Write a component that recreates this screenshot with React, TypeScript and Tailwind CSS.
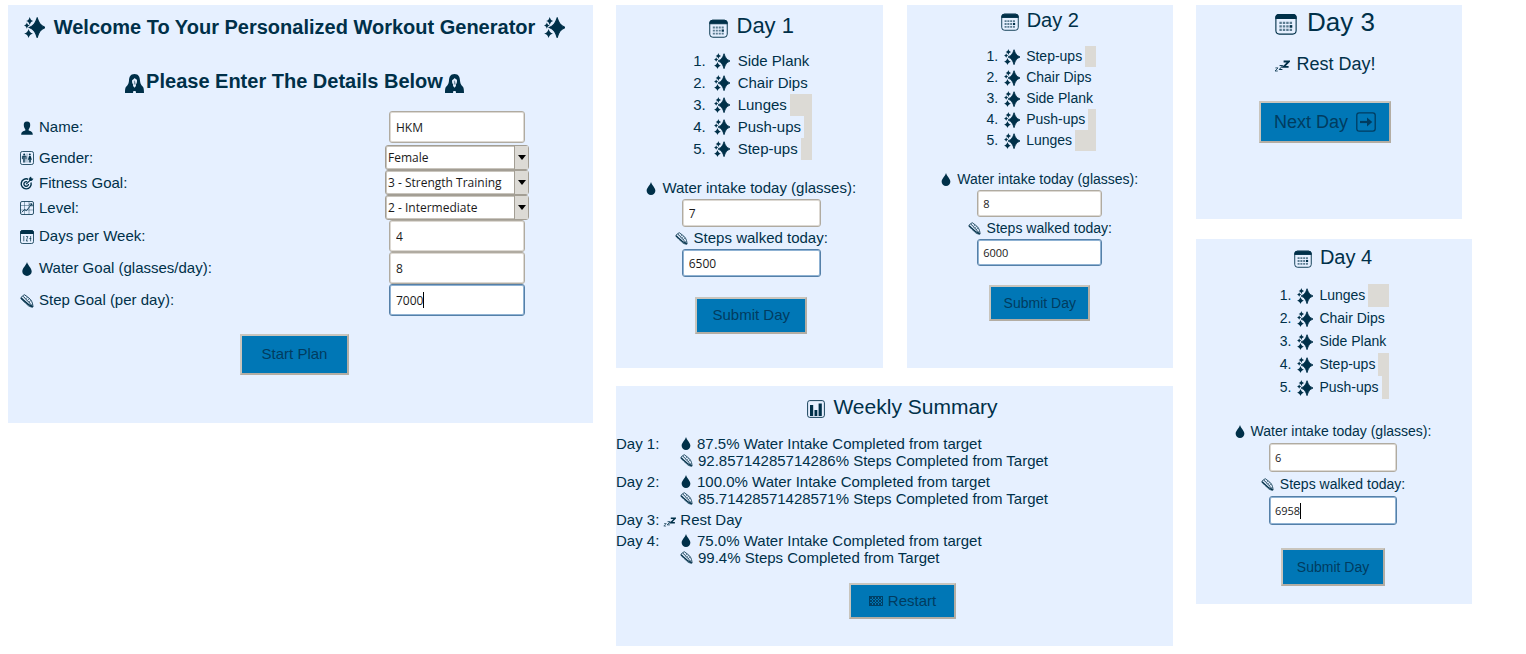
import React from "react";

type IconProps = { className?: string };

function Sparkles({ className = "" }: IconProps) {
  return (
    <svg viewBox="0 0 22 22" className={className} fill="currentColor" aria-hidden="true">
      <path d="M13.800 1 C15.600 6.300 17 8.800 22 11 C17 13.200 15.600 15.700 13.800 21.500 C12 15.700 10.600 13.200 5.600 11 C10.600 8.800 12 6.300 13.800 1Z" stroke="currentColor" strokeWidth="1.200" />
      <path d="M6 0 C6.800 2.600 7.500 3.400 9.700 4.200 C7.500 5 6.800 5.800 6 8.300 C5.200 5.800 4.500 5 2.300 4.200 C4.500 3.400 5.200 2.600 6 0Z" />
      <path d="M3 5.800 C3.700 7.700 4.200 8.300 6 9 C4.200 9.700 3.700 10.300 3 12.200 C2.300 10.300 1.800 9.700 0 9 C1.800 8.300 2.300 7.700 3 5.800Z" />
      <path d="M4.800 12.500 C5.800 15.400 6.600 16.400 9.400 17.400 C6.600 18.400 5.800 19.300 4.800 22 C3.800 19.300 3 18.400 0.200 17.400 C3 16.400 3.800 15.400 4.800 12.500Z" />
    </svg>
  );
}

function Woman({ className = "" }: IconProps) {
  return (
    <svg viewBox="0 0 20 20" className={className} fill="currentColor" aria-hidden="true">
      <path fillRule="evenodd" d="M10 0C5.800 0 4.400 3 4.200 7C4 9.500 3.200 11 2.200 12.300C0.600 13.500 0 15 0 20H8.400L8.800 18H11.200L11.600 20H20C20 15 19.400 13.500 17.800 12.300C16.800 11 16 9.500 15.800 7C15.600 3 14.200 0 10 0ZM10 4.300C10.800 5.300 11.900 5.700 12.600 6C12.800 8.600 12.200 10.200 11.500 11V12.600L10 14.600L8.500 12.600V11C7.600 9.900 7.200 8 7.500 6.500C8.400 6.200 9.400 5.400 10 4.300Z" />
      <path d="M9.600 7.500L10.400 6.500L11.300 11H9.200Z" opacity="0.500" />
    </svg>
  );
}

function Bust({ className = "" }: IconProps) {
  return (
    <svg viewBox="0 0 14 14" className={className} fill="currentColor" aria-hidden="true">
      <path d="M7 0.500C4.500 0.500 3.600 2 3.800 4.200C3.900 6 4.500 7.300 5.300 8.200V9.500C3.300 10.200 1.200 10.500 1.200 13.800H12.800C12.800 10.500 10.700 10.200 8.700 9.500V8.200C9.500 7.300 10.100 6 10.200 4.200C10.400 2 9.500 0.500 7 0.500Z" />
    </svg>
  );
}

function Restroom({ className = "" }: IconProps) {
  return (
    <svg viewBox="0 0 14 14" className={className} fill="none" stroke="currentColor" aria-hidden="true">
      <rect x="0.500" y="0.500" width="13" height="13" rx="1.800" strokeWidth="0.800" />
      <circle cx="4.200" cy="3.500" r="1" fill="currentColor" stroke="none" />
      <circle cx="9.800" cy="3.500" r="1" fill="currentColor" stroke="none" />
      <path d="M2.400 8.200V5.200H6V8.200M3.700 5V11.500M4.800 5V11.500M9.300 8.500V11.500M10.400 8.500V11.500" strokeWidth="0.900" />
      <path d="M9 5H10.700L11.900 8.800H7.900Z" fill="currentColor" stroke="none" />
      <path d="M7 2.500V11.500" strokeWidth="0.400" />
    </svg>
  );
}

function Target({ className = "" }: IconProps) {
  return (
    <svg viewBox="0 0 14 14" className={className} fill="none" stroke="currentColor" aria-hidden="true">
      <path d="M8.300 3.300A5 5 0 1 0 11 6.500" strokeWidth="1.400" />
      <path d="M7.200 5.900A2.300 2.300 0 1 0 8.500 8" strokeWidth="1.300" />
      <path d="M6.200 8.200L11 3.400" strokeWidth="1.200" />
      <path d="M9.100 4L9.200 2L11 0.500L11.500 2.300L13.500 2.800L11.900 4.800L10 5Z" fill="currentColor" stroke="none" />
    </svg>
  );
}

function TrendChart({ className = "" }: IconProps) {
  return (
    <svg viewBox="0 0 14 14" className={className} fill="none" stroke="currentColor" aria-hidden="true">
      <rect x="0.500" y="0.500" width="13" height="13" rx="1.500" strokeWidth="0.800" />
      <path d="M4.500 0.500V13.500M9 0.500V13.500M0.500 4.500H13.500M0.500 9H13.500" strokeWidth="0.400" />
      <path d="M1.800 11.300L4.500 8.600L6.500 9.600L11.800 3M9.300 3.300L11.900 2.700L12 5.400" strokeWidth="0.900" />
    </svg>
  );
}

function DatePage({ className = "" }: IconProps) {
  return (
    <svg viewBox="0 0 14 14" className={className} fill="none" stroke="currentColor" aria-hidden="true">
      <rect x="0.500" y="0.500" width="13" height="13" rx="1.800" strokeWidth="0.800" />
      <path d="M0.600 3.500V2.400Q0.600 0.600 2.400 0.600H11.600Q13.400 0.600 13.400 2.400V3.500Z" fill="currentColor" />
      <path d="M3.800 6V11.300M6 6.500H7.800L6.300 11H8M10.600 6V11.300M9.300 8.600H11.300" strokeWidth="0.700" />
    </svg>
  );
}

function Calendar({ className = "" }: IconProps) {
  return (
    <svg viewBox="0 0 20 20" className={className} fill="none" stroke="currentColor" aria-hidden="true">
      <rect x="0.800" y="1.300" width="18.400" height="17.900" rx="3.200" strokeWidth="1" />
      <path d="M0.800 5V4Q0.800 1.300 3.500 1.300H16.500Q19.200 1.300 19.200 4V5Z" fill="currentColor" />
      <g strokeWidth="2" strokeDasharray="2.200 0.900" opacity="0.600">
        <path d="M4 9H16" />
        <path d="M4 12.200H12.900" />
        <path d="M4 15.400H16" />
      </g>
      <path d="M13.300 12.200H15.700" strokeWidth="2.400" />
    </svg>
  );
}

function Drop({ className = "" }: IconProps) {
  return (
    <svg viewBox="0 0 10 14" className={className} fill="currentColor" aria-hidden="true">
      <path d="M5 0C5.700 3.200 9.700 6.200 9.700 9.400A4.700 4.500 0 0 1 0.300 9.400C0.300 6.200 4.300 3.200 5 0Z" />
    </svg>
  );
}

function Shoe({ className = "" }: IconProps) {
  return (
    <svg viewBox="0 0 14 14" className={className} fill="none" stroke="currentColor" aria-hidden="true">
      <path d="M0.800 4.200C1.600 2.600 2.800 1.400 4.600 0.800C6.500 2.400 9 3.600 10.600 5.600C12.200 7.700 12.900 10.500 13 13C10.500 13.200 8.600 12.200 7 10.400C5.300 8.500 2.400 6.800 0.800 4.200Z" strokeWidth="0.900" />
      <path d="M1.200 4C3.800 6.200 7 10.400 12.600 12.900" strokeWidth="1.400" />
      <path d="M3.400 2.400C5.400 5.600 9.600 8 12.300 12.200" strokeWidth="1" />
      <path d="M6 4.600L7.600 3.400M7.600 6.200L9.400 4.800M9 8L11 6.400" strokeWidth="0.600" />
    </svg>
  );
}

function Sleep({ className = "" }: IconProps) {
  return (
    <svg viewBox="0 0 16 12" className={className} fill="none" stroke="currentColor" aria-hidden="true">
      <path d="M9.600 1.500H15L9.600 6.800H14.600" strokeWidth="1.800" />
      <path d="M5.600 5.600H8.800L5.200 9.500H8.400" strokeWidth="1" />
      <path d="M1.400 7.900H4L1 11H3.800" strokeWidth="0.800" />
    </svg>
  );
}

function BarChart({ className = "" }: IconProps) {
  return (
    <svg viewBox="0 0 18 18" className={className} fill="none" stroke="currentColor" aria-hidden="true">
      <rect x="0.600" y="0.600" width="16.800" height="16.800" rx="2.200" strokeWidth="0.900" />
      <path d="M3 5H6.200V16H3ZM7.500 10H10.300V16H7.500ZM11.600 3.400H14.800V16H11.600Z" fill="currentColor" stroke="none" />
    </svg>
  );
}

function ArrowBox({ className = "" }: IconProps) {
  return (
    <svg viewBox="0 0 20 20" className={className} fill="none" stroke="currentColor" aria-hidden="true">
      <rect x="0.800" y="0.800" width="18.400" height="18.400" rx="2.400" strokeWidth="1.300" />
      <path d="M4 10H12" strokeWidth="2.200" />
      <path d="M11 5.600L16.200 10L11 14.400Z" fill="currentColor" stroke="none" />
    </svg>
  );
}

function CheckeredFlag({ className = "" }: IconProps) {
  return (
    <svg viewBox="0 0 14 10" className={className} fill="none" stroke="currentColor" aria-hidden="true">
      <rect x="0.500" y="0.500" width="13" height="9" strokeWidth="0.900" />
      <path d="M0.500 3.500L3.500 0.500M0.500 6.500L6.500 0.500M0.500 9.500L9.500 0.500M3.500 9.500L12.500 0.500M6.500 9.500L13.500 2.500M9.500 9.500L13.500 5.500M0.500 6.500L3.500 9.500M0.500 3.500L6.500 9.500M0.500 0.500L9.500 9.500M3.500 0.500L12.500 9.500M6.500 0.500L13.500 7.500M9.500 0.500L13.500 4.500" strokeWidth="0.900" />
    </svg>
  );
}

const entryBase =
  "block w-full rounded-[3px] border bg-white font-['Open_Sans',sans-serif] text-[#1a1a1a] outline-none";
const entryIdle = "border-[#b0aba1] shadow-[inset_0_0_0_1px_#ddd9d3]";
const entryActive = "border-[#5580a8] shadow-[inset_0_0_0_1px_#8fb2d3]";

type EntrySize = "large" | "small";

const entryText: Record<EntrySize, string> = {
  large: "px-[6px] text-xs",
  small: "px-[5px] text-[11px]",
};

function Entry({
  id,
  value,
  size,
  active = false,
  caret = false,
  className,
}: {
  id: string;
  value: string;
  size: EntrySize;
  active?: boolean;
  caret?: boolean;
  className: string;
}) {
  return (
    <div className="relative w-full">
      <input
        id={id}
        defaultValue={value}
        className={`${entryBase} ${active ? entryActive : entryIdle} ${entryText[size]} ${className}`}
      />
      {caret && (
        <span
          className={`pointer-events-none absolute inset-0 flex items-center border border-transparent font-['Open_Sans',sans-serif] ${entryText[size]}`}
        >
          <span className="invisible">{value}</span>
          <span className="h-4 w-px bg-black" />
        </span>
      )}
    </div>
  );
}

function Picker({ id, value, options }: { id: string; value: string; options: string[] }) {
  return (
    <div className="relative w-36">
      <select
        id={id}
        defaultValue={value}
        className="block h-[25px] w-full appearance-none rounded-[3px] border border-[#a39e94] bg-white pr-4 pl-[2px] font-['Open_Sans',sans-serif] text-xs text-[#1a1a1a] shadow-[inset_0_0_0_1px_#c9c5bd] outline-none"
      >
        {options.map((o) => (
          <option key={o}>{o}</option>
        ))}
      </select>
      <span className="pointer-events-none absolute inset-y-px right-px flex w-[14px] items-center justify-center border-l border-[#a39e94] bg-[#dcdad5]">
        <svg viewBox="0 0 8 5" className="h-[5px] w-2" aria-hidden="true">
          <path d="M0 0H8L4 5Z" fill="#000" />
        </svg>
      </span>
    </div>
  );
}

const buttonLook =
  "flex items-center justify-center border-2 border-t-[#c9c5bd] border-l-[#c9c5bd] border-r-[#b3ada3] border-b-[#b3ada3] bg-[#0077b6] text-[#003c60]";

function FormRow({
  icon,
  label,
  htmlFor,
  children,
}: {
  icon: React.ReactNode;
  label: string;
  htmlFor: string;
  children: React.ReactNode;
}) {
  return (
    <div className="flex items-center justify-between">
      <label htmlFor={htmlFor} className="flex items-center text-[15px] leading-5">
        <span className="flex w-[19px] items-center pt-px">{icon}</span>
        {label}
      </label>
      <div className="flex w-36 justify-center">{children}</div>
    </div>
  );
}

function PlanForm() {
  return (
    <section className="bg-[#e6f0ff] pt-2 pr-3 pb-12">
      <h1 className="flex items-center justify-center gap-[9px] text-xl leading-7 font-bold">
        <Sparkles className="size-[21px]" />
        Welcome To Your Personalized Workout Generator
        <Sparkles className="size-[21px]" />
      </h1>
      <h2 className="mt-[26px] flex items-center justify-center gap-[2px] text-xl leading-7 font-bold">
        <Woman className="mt-1 size-[19px]" />
        Please Enter The Details Below
        <Woman className="mt-1 size-[19px]" />
      </h2>
      <form className="mt-4 pl-3" onSubmit={(e) => e.preventDefault()}>
        <div className="pr-[52px]">
          <div className="mb-[2px]">
            <FormRow icon={<Bust className="size-[14px]" />} label="Name:" htmlFor="name">
              <div className="w-[136px]">
                <Entry id="name" value="HKM" size="large" className="h-8" />
              </div>
            </FormRow>
          </div>
          <FormRow icon={<Restroom className="size-[14px]" />} label="Gender:" htmlFor="gender">
            <Picker id="gender" value="Female" options={["Female", "Male"]} />
          </FormRow>
          <FormRow icon={<Target className="size-[14px]" />} label="Fitness Goal:" htmlFor="goal">
            <Picker id="goal" value="3 - Strength Training" options={["1 - Weight Loss", "2 - Endurance", "3 - Strength Training"]} />
          </FormRow>
          <FormRow icon={<TrendChart className="size-[14px]" />} label="Level:" htmlFor="level">
            <Picker id="level" value="2 - Intermediate" options={["1 - Beginner", "2 - Intermediate", "3 - Advanced"]} />
          </FormRow>
          <FormRow icon={<DatePage className="size-[14px]" />} label="Days per Week:" htmlFor="days">
            <div className="w-[136px]">
              <Entry id="days" value="4" size="large" className="h-8" />
            </div>
          </FormRow>
          <FormRow icon={<Drop className="ml-[2px] h-[14px] w-[10px]" />} label="Water Goal (glasses/day):" htmlFor="water-goal">
            <div className="w-[136px]">
              <Entry id="water-goal" value="8" size="large" className="h-8" />
            </div>
          </FormRow>
          <FormRow icon={<Shoe className="size-[14px]" />} label="Step Goal (per day):" htmlFor="step-goal">
            <div className="w-[136px]">
              <Entry id="step-goal" value="7000" size="large" active caret className="h-8" />
            </div>
          </FormRow>
        </div>
        <div className="mt-[18px] -ml-3 flex justify-center">
          <button type="submit" className={`${buttonLook} h-[41px] w-[109px] text-[15px]`}>
            Start Plan
          </button>
        </div>
      </form>
    </section>
  );
}

type DaySize = {
  card: string;
  title: string;
  titleIcon: string;
  list: string;
  item: string;
  fields: string;
  label: string;
  box: string;
  entry: string;
  entrySize: EntrySize;
  button: string;
};

const day1: DaySize = {
  card: "pt-[7px] pb-[34px] pl-1",
  title: "gap-[9px] text-[22px] leading-7",
  titleIcon: "mt-1 size-[19px]",
  list: "mt-[10px] text-[15px] leading-[22px]",
  item: "gap-2",
  fields: "mt-[17px]",
  label: "gap-[6px] text-[15px] leading-[22px]",
  box: "w-[139px]",
  entry: "h-7",
  entrySize: "large",
  button: "mt-5 h-[37px] w-28 text-[15px]",
};

const day2: DaySize = {
  card: "pt-[3px] pb-[47px]",
  title: "gap-2 text-xl leading-6",
  titleIcon: "mt-1 size-[18px]",
  list: "mt-[14px] text-sm leading-[21px]",
  item: "gap-[6px]",
  fields: "mt-[17px]",
  label: "gap-[6px] text-sm leading-[22px]",
  box: "w-[125px]",
  entry: "h-[27px]",
  entrySize: "small",
  button: "mt-[19px] h-9 w-[101px] text-sm",
};

const day4: DaySize = {
  card: "pt-1 pb-[18px] pr-[2px]",
  title: "gap-2 text-xl leading-7",
  titleIcon: "mt-1 size-[18px]",
  list: "mt-[13px] text-sm leading-[23px]",
  item: "gap-[6px]",
  fields: "mt-5",
  label: "gap-[6px] text-sm leading-6",
  box: "w-32",
  entry: "h-[29px]",
  entrySize: "small",
  button: "mt-[23px] h-[38px] w-[104px] text-sm",
};

function DayCard({
  day,
  size,
  exercises,
  water,
  steps,
  caret = false,
}: {
  day: number;
  size: DaySize;
  exercises: string[];
  water: string;
  steps: string;
  caret?: boolean;
}) {
  return (
    <section className={`flex flex-col items-center bg-[#e6f0ff] ${size.card}`}>
      <h2 className={`flex items-center ${size.title}`}>
        <Calendar className={size.titleIcon} />
        Day {day}
      </h2>
      <ol className={`bg-[#dcdad5] ${size.list}`}>
        {exercises.map((name, i) => (
          <li
            key={name}
            className={`flex items-center bg-[#e6f0ff] px-[3px] ${size.item} ${name.length > 9 ? "w-full" : "w-fit"}`}
          >
            <span>{i + 1}.</span>
            <Sparkles className="size-4" />
            <span>{name}</span>
          </li>
        ))}
      </ol>
      <form className={`flex flex-col items-center ${size.fields}`} onSubmit={(e) => e.preventDefault()}>
        <label htmlFor={`water-${day}`} className={`flex items-center ${size.label}`}>
          <Drop className="mt-px h-[13px] w-[10px]" />
          Water intake today (glasses):
        </label>
        <div className={size.box}>
          <Entry id={`water-${day}`} value={water} size={size.entrySize} className={size.entry} />
        </div>
        <label htmlFor={`steps-${day}`} className={`flex items-center ${size.label}`}>
          <Shoe className="mt-px size-[13px]" />
          Steps walked today:
        </label>
        <div className={size.box}>
          <Entry id={`steps-${day}`} value={steps} size={size.entrySize} active caret={caret} className={size.entry} />
        </div>
        <button type="submit" className={`${buttonLook} ${size.button}`}>
          Submit Day
        </button>
      </form>
    </section>
  );
}

function RestCard() {
  return (
    <section className="mr-[10px] flex flex-col items-center bg-[#e6f0ff] pt-px pr-2 pb-[76px]">
      <h2 className="flex items-center gap-[10px] text-[26px] leading-8">
        <Calendar className="mt-1 size-[22px]" />
        Day 3
      </h2>
      <p className="mt-[14px] flex items-center gap-[6px] text-lg leading-6">
        <Sleep className="mt-1 h-3 w-4" />
        Rest Day!
      </p>
      <button type="button" className={`${buttonLook} mt-[25px] h-[42px] w-[132px] gap-2 text-lg`}>
        Next Day
        <ArrowBox className="size-5" />
      </button>
    </section>
  );
}

function Result({ day, water, steps }: { day: number; water: string; steps: string }) {
  return (
    <div className="flex">
      <dt className="w-16">Day {day}:</dt>
      <dd>
        <div className="flex items-center gap-[6px]">
          <Drop className="ml-px h-[13px] w-[10px]" />
          {water}% Water Intake Completed from target
        </div>
        <div className="flex items-center gap-[5px]">
          <Shoe className="size-[13px]" />
          {steps}% Steps Completed from Target
        </div>
      </dd>
    </div>
  );
}

function Summary() {
  return (
    <section className="bg-[#e6f0ff] pt-[7px] pb-[27px]">
      <h2 className="flex items-center justify-center gap-2 pl-4 text-[21px] leading-7">
        <BarChart className="mt-1 size-[18px]" />
        Weekly Summary
      </h2>
      <dl className="mt-[14px] flex flex-col gap-1 text-[15px] leading-[17px]">
        <Result day={1} water="87.5" steps="92.85714285714286" />
        <Result day={2} water="100.0" steps="85.71428571428571" />
        <div className="flex gap-1">
          <dt>Day 3:</dt>
          <dd className="flex items-center gap-1">
            <Sleep className="mt-1 h-[10px] w-[13px]" />
            Rest Day
          </dd>
        </div>
        <Result day={4} water="75.0" steps="99.4" />
      </dl>
      <div className="mt-[17px] flex justify-center pl-4">
        <button type="button" className={`${buttonLook} h-9 w-[107px] gap-[5px] text-[15px]`}>
          <CheckeredFlag className="h-[10px] w-[14px]" />
          Restart
        </button>
      </div>
    </section>
  );
}

export default function App() {
  return (
    <main className="grid min-h-screen grid-cols-[585fr_557fr_276fr] items-start gap-[23px] bg-white pt-[5px] pr-[54px] pb-2 pl-2 font-['Liberation_Sans',Arial,sans-serif] text-[#003049]">
      <PlanForm />
      <div className="flex flex-col gap-[18px]">
        <div className="grid grid-cols-2 gap-6">
          <DayCard
            day={1}
            size={day1}
            exercises={["Side Plank", "Chair Dips", "Lunges", "Push-ups", "Step-ups"]}
            water="7"
            steps="6500"
          />
          <DayCard
            day={2}
            size={day2}
            exercises={["Step-ups", "Chair Dips", "Side Plank", "Push-ups", "Lunges"]}
            water="8"
            steps="6000"
          />
        </div>
        <Summary />
      </div>
      <div className="flex flex-col gap-5">
        <RestCard />
        <DayCard
          day={4}
          size={day4}
          exercises={["Lunges", "Chair Dips", "Side Plank", "Step-ups", "Push-ups"]}
          water="6"
          steps="6958"
          caret
        />
      </div>
    </main>
  );
}
